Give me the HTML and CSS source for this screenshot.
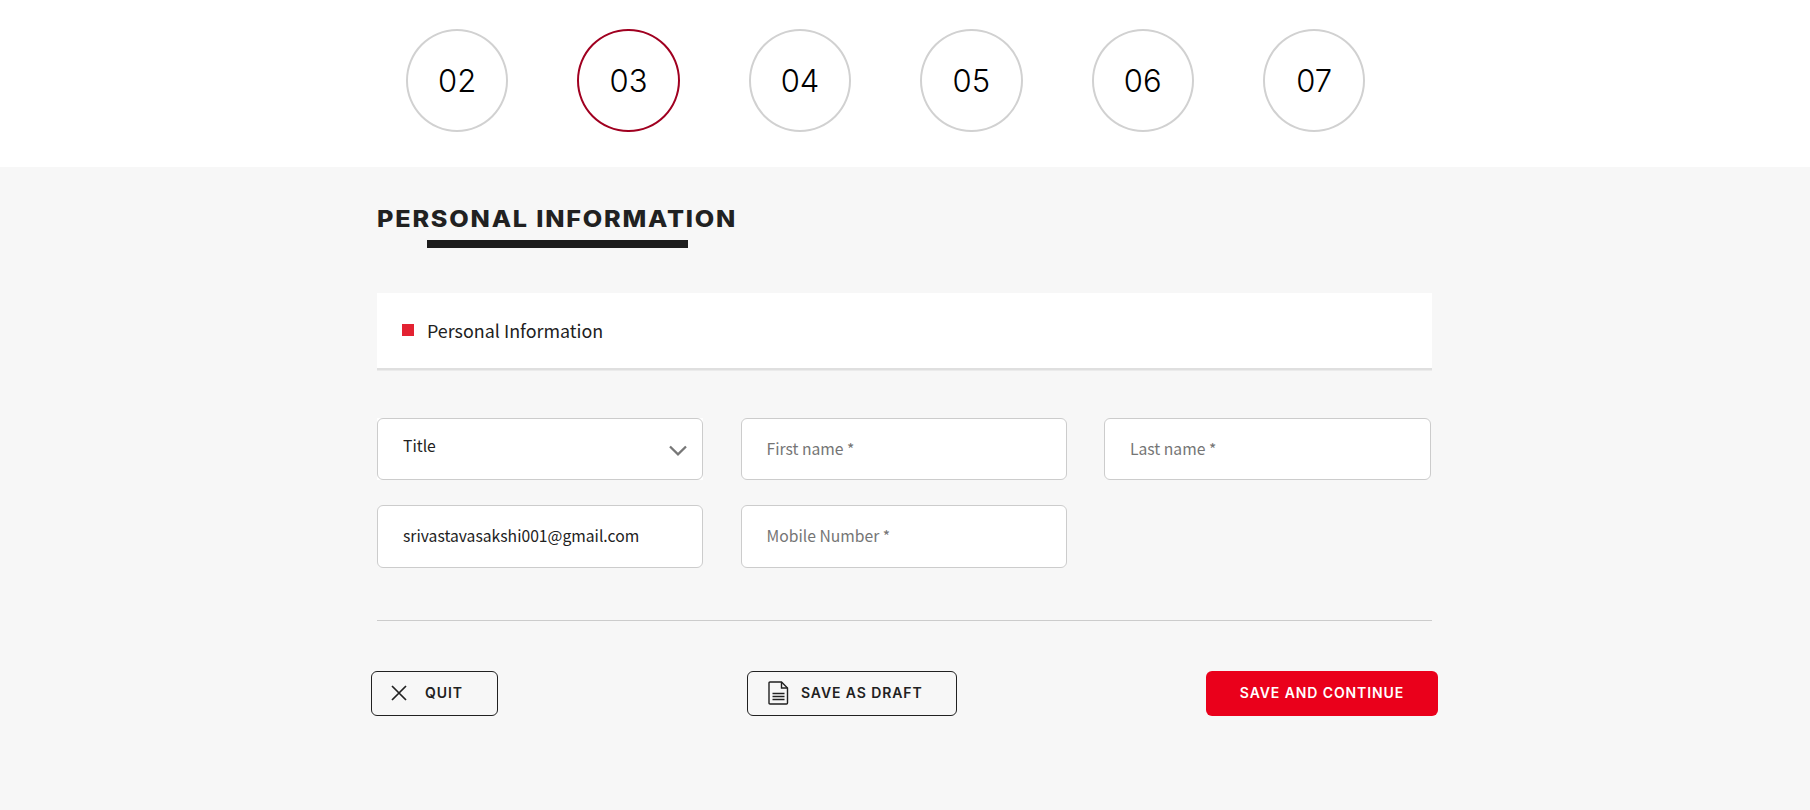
FILE: index.html
```html
<!DOCTYPE html>
<html lang="en">
<head>
<meta charset="utf-8">
<title>Personal Information</title>
<link rel="stylesheet" href="styles.css">
</head>
<body>
<div class="steps">
  <span class="step">02</span>
  <span class="step active">03</span>
  <span class="step">04</span>
  <span class="step">05</span>
  <span class="step">06</span>
  <span class="step">07</span>
</div>

<div class="main">
  <form class="container">
    <h2 class="heading"><span class="heading-text">Personal Information</span></h2>

    <div class="panel"><span class="square"></span><span class="panel-title">Personal Information</span></div>

    <div class="fields">
      <div class="select-wrap">
        <select class="field select"><option>Title</option></select>
        <svg class="chevron" width="18" height="12" viewBox="0 0 18 12"><path d="M1 1.5l8 7.8 8-7.8" fill="none" stroke="#777" stroke-width="2.3"/></svg>
      </div>
      <input class="field" type="text" placeholder="First name *">
      <input class="field" type="text" placeholder="Last name *">
      <input class="field second" type="text" value="srivastavasakshi001@gmail.com">
      <input class="field second" type="text" placeholder="Mobile Number *">
    </div>

    <div class="buttons">
      <button type="button" class="btn quit">
        <svg width="16" height="16" viewBox="0 0 16 16"><path d="M1 1l14 14M15 1L1 15" fill="none" stroke="#212121" stroke-width="1.7"/></svg>
        <span class="btn-text">Quit</span>
      </button>
      <button type="button" class="btn draft">
        <svg width="21" height="24" viewBox="0 0 21 24"><g fill="none" stroke="#212121" stroke-width="1.4"><path d="M2 1h11.5l6 6v15q0 1-1 1H2q-1 0-1-1V2q0-1 1-1z"/><path d="M13.5 1v6h6"/><path d="M4.5 12.5h12M4.5 15.5h12M4.5 18.5h12"/></g></svg>
        <span class="btn-text">Save as draft</span>
      </button>
      <button type="button" class="btn continue"><span class="btn-text">Save and continue</span></button>
    </div>
  </form>
</div>
</body>
</html>
```
FILE: styles.css
```css
* { box-sizing: border-box; }
body { margin: 0; background: #fff; color: #212121; font-family: "Noto Sans CJK JP", sans-serif; overflow: hidden; }

.steps { display: flex; gap: 69px; height: 167px; padding: 29px 0 0 406px; }
.step { flex: none; width: 102.4px; height: 103px; border: 2px solid #d1d1d1; border-radius: 50%; color: #000; font: 350 31px/100px Inter, sans-serif; text-align: center; }
.step.active { border-color: #a00020; }

.main { height: 643px; background: #f7f7f7; padding-top: 37px; }
.container { width: 1055px; margin: 0 0 0 377px; }

.heading { margin: 0; height: 44px; font: 800 22.5px/30px Inter, sans-serif; text-transform: uppercase; }
.heading-text { display: block; width: max-content; letter-spacing: 1.6px; white-space: nowrap; transform: scaleX(1.12); transform-origin: 0 50%; }
.heading::after { content: ""; display: block; width: 261px; height: 8px; margin: 6px 0 0 50px; background: #1d1d1d; }

.panel { display: flex; align-items: center; height: 75px; margin-top: 45px; padding-left: 25px; background: #fff; box-shadow: 0 2px 0 #dfdfdf, 0 3px 0 #ebebeb; }
.square { width: 12px; height: 12px; margin: 0 13px 1px 0; background: #e32232; }
.panel-title { padding-bottom: 2px; font-size: 17.9px; line-height: 26px; }

.fields { display: grid; grid-template-columns: 326px 326px 327px; column-gap: 37.5px; row-gap: 25px; height: 253px; padding-top: 50px; border-bottom: 1px solid #ccc; align-content: start; }
.field { width: 100%; height: 62px; margin: 0; padding: 0 25px 2px 25px; border: 1px solid #ccc; border-radius: 6px; outline: 0; background: #fff; color: #212121; font: 400 15.7px "Noto Sans CJK JP", sans-serif; }
.field.second { height: 63px; padding-bottom: 3px; }
.field::placeholder { color: #757575; }
.select-wrap { position: relative; height: 62px; background: #fff; }
.select { display: block; appearance: none; padding-bottom: 8px; }
.chevron { position: absolute; right: 16px; top: 27px; }

.buttons { display: flex; justify-content: space-between; margin: 50px -6px 0; }
.btn { display: flex; align-items: center; height: 45px; padding: 0; border: 1px solid #212121; border-radius: 6px; background: none; color: #212121; font: 600 14px Inter, sans-serif; text-transform: uppercase; white-space: nowrap; }
.btn svg { margin-bottom: 1px; }
.quit { width: 127px; padding-left: 19px; gap: 18px; }
.draft { width: 210px; padding-left: 20px; gap: 12px; }
.continue { width: 232px; justify-content: center; border: 0; background: #ea001b; color: #fff; }
.btn-text { padding-bottom: 2px; letter-spacing: .9px; }
```
